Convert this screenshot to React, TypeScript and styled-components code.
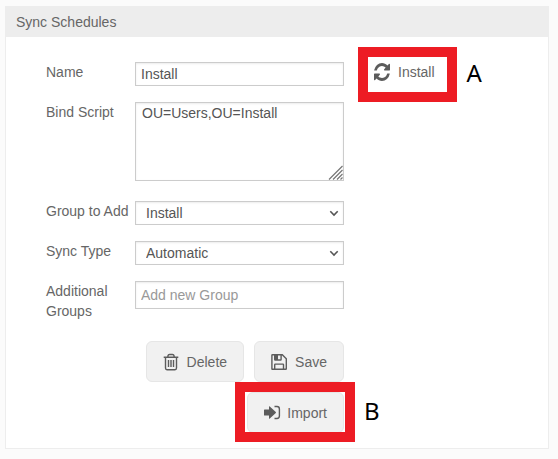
import React from "react";
import styled, { createGlobalStyle, css } from "styled-components";

const GlobalStyle = createGlobalStyle`
  * { box-sizing: border-box; }
  body {
    margin: 0;
    background: #fbfbfb;
    color: #555;
    font: 14px/20px "Liberation Sans", Arial, sans-serif;
  }
`;

const Panel = styled.section`
  margin: 6px 9px 9px 5px;
  background: #fff;
  border: 1px solid #ededed;
  border-top: 0;
`;

const PanelTitle = styled.h1`
  margin: 0;
  padding: 6px 10px 5px;
  background: #ededed;
  color: #666;
  font-size: 14px;
  font-weight: normal;
  line-height: 20px;
`;

const Form = styled.form`
  display: grid;
  gap: 16px;
  padding: 25px 40px 15px;
`;

const Row = styled.div`
  display: grid;
  grid-template-columns: 89px minmax(0, 209px) 1fr;
  align-items: start;
`;

const Label = styled.label`
  color: #666;
`;

const control = css`
  display: block;
  width: 100%;
  margin: 0;
  border: 1px solid #ccc;
  border-radius: 0;
  background: #fff;
  box-shadow: inset 0 1px 2px rgba(0, 0, 0, 0.08);
  color: #555;
  font: inherit;
  outline: none;
`;

const TextInput = styled.input<{ $tall?: boolean }>`
  ${control}
  height: ${(p) => (p.$tall ? 28 : 24)}px;
  padding: 0 5px;
  &::placeholder { color: #999; opacity: 1; }
`;

const SelectBox = styled.div`
  position: relative;
`;

const Select = styled.select`
  ${control}
  appearance: none;
  height: 24px;
  padding: 0 20px 0 10px;
`;

const Chevron = styled.svg`
  position: absolute;
  right: 5px;
  top: 9px;
  width: 10px;
  height: 7px;
  pointer-events: none;
`;

const ScriptBox = styled.div`
  position: relative;
  margin-bottom: 4px;
`;

const TextArea = styled.textarea`
  ${control}
  height: 79px;
  padding: 0 6px;
  resize: none;
`;

const Grip = styled.svg`
  position: absolute;
  right: 1px;
  bottom: 1px;
  width: 15px;
  height: 15px;
  pointer-events: none;
`;

const Actions = styled.div`
  display: flex;
  flex-wrap: wrap;
  justify-content: flex-end;
  gap: 10px;
  width: 100%;
  max-width: 298px;
  padding-top: 4px;
`;

const Button = styled.button<{ $plain?: boolean }>`
  display: inline-flex;
  align-items: center;
  gap: 8px;
  height: ${(p) => (p.$plain ? 35 : 41)}px;
  padding: ${(p) => (p.$plain ? "0 11px 5px 5px" : "0 16px")};
  border: 1px solid ${(p) => (p.$plain ? "transparent" : "#e6e6e6")};
  border-radius: 6px;
  background: ${(p) => (p.$plain ? "transparent" : "#f1f1f1")};
  color: #666;
  font: inherit;
  white-space: nowrap;
  cursor: pointer;
`;

const Icon = styled.svg<{ $width?: number }>`
  flex: none;
  width: ${(p) => p.$width ?? 16}px;
  height: 18px;
  color: #5c5c5c;
`;

const Marked = styled.div<{ $side?: boolean }>`
  position: relative;
  display: flex;
  width: max-content;
  ${(p) => p.$side && "margin: -5px 0 -6px 24px;"}

  &::after {
    content: "";
    position: absolute;
    inset: ${(p) => (p.$side ? "-10px" : "-10px -11px -9px -12px")};
    border: 10px solid #ed1c24;
    pointer-events: none;
  }
`;

const Marker = styled.span`
  position: absolute;
  left: 100%;
  top: 0;
  bottom: 4px;
  display: flex;
  align-items: center;
  margin-left: 20px;
  color: #000;
  font-family: "Noto Sans", "Open Sans", sans-serif;
  font-size: 24px;
  line-height: 32px;
`;

const RefreshIcon = () => (
  <Icon viewBox="0 128 1536 1536" preserveAspectRatio="none" aria-hidden="true">
    <path
      fill="currentColor"
      d="M1511 1056q0 5-1 7-64 268-268 434.500t-478 166.500q-146 0-282.500-55t-243.500-157l-129 129q-19 19-45 19t-45-19-19-45v-448q0-26 19-45t45-19h448q26 0 45 19t19 45-19 45l-137 137q71 66 161 102t187 36q134 0 250-65t186-179q11-17 53-117 8-23 30-23h192q13 0 22.500 9.500t9.500 22.500zm25-800v448q0 26-19 45t-45 19h-448q-26 0-45-19t-19-45 19-45l138-138q-148-137-349-137-134 0-250 65t-186 179q-11 17-53 117-8 23-30 23h-199q-13 0-22.500-9.500t-9.500-22.500v-7q65-268 270-434.500t480-166.500q146 0 284 55.500t245 156.500l130-129q19-19 45-19t45 19 19 45z"
    />
  </Icon>
);

const TrashIcon = () => (
  <Icon viewBox="0 0 16 18" fill="none" stroke="currentColor" strokeWidth="1.4" aria-hidden="true">
    <path d="M.7 4.200h14.600M4.900 4V3Q5.200 1.500 6.500 1.500h3Q10.800 1.500 11.100 3v1M2.500 4.500v10.600q0 1.700 1.500 1.700h8q1.500 0 1.500-1.700V4.500" />
    <path d="M5.500 7v7M8 7v7M10.500 7v7" />
  </Icon>
);

const SaveIcon = () => (
  <Icon viewBox="0 0 16 18" fill="none" stroke="currentColor" strokeWidth="1.4" aria-hidden="true">
    <path d="M1.500 1.700h9.800l4 4v10q0 .6-.6.6H1.500q-.6 0-.6-.6V2.300q0-.6.600-.6zM3.700 16v-4.300q0-.6.600-.6h7.600q.6 0 .6.600V16" />
    <path d="M3.700 2v4.500q0 .5.500.5h5.400q.5 0 .5-.5V2" />
    <path d="M4 2h3v5H4z" fill="currentColor" stroke="none" />
  </Icon>
);

const ImportIcon = () => (
  <Icon $width={15} viewBox="0 0 15 18" aria-hidden="true" overflow="visible">
    <path fill="currentColor" d="M.6 5.500h4.400V2.700q0-.9.800-.3l6 5.600q.4.500 0 1l-6 5.600q-.8.600-.8-.3v-2.800H.6q-.6 0-.6-.6V6.100q0-.6.600-.6z" />
    <path fill="none" stroke="currentColor" strokeWidth="1.400" d="M10.500 2.500h2.500q2.400 0 2.400 2.400v7.200q0 2.400-2.400 2.400h-2.500" />
  </Icon>
);

function Dropdown({ id, options }: { id: string; options: string[] }) {
  return (
    <SelectBox>
      <Select id={id} defaultValue={options[0]}>
        {options.map((option) => (
          <option key={option}>{option}</option>
        ))}
      </Select>
      <Chevron viewBox="0 0 10 7" fill="none" stroke="#555" strokeWidth="1.600" aria-hidden="true">
        <path d="M1.300 1.300L5 5l3.700-3.700" />
      </Chevron>
    </SelectBox>
  );
}

export default function App() {
  return (
    <>
      <GlobalStyle />
      <Panel>
        <PanelTitle>Sync Schedules</PanelTitle>
        <Form onSubmit={(e) => e.preventDefault()}>
          <Row>
            <Label htmlFor="name">Name</Label>
            <TextInput id="name" defaultValue="Install" />
            <Marked $side>
              <Button type="button" $plain>
                <RefreshIcon />
                Install
              </Button>
              <Marker>A</Marker>
            </Marked>
          </Row>
          <Row>
            <Label htmlFor="script">Bind Script</Label>
            <ScriptBox>
              <TextArea id="script" defaultValue="OU=Users,OU=Install" spellCheck={false} />
              <Grip viewBox="0 0 15 15" stroke="#777" strokeWidth="1.200" aria-hidden="true">
                <path d="M1 14.500L14.500 1M5 14.500L14.500 5M9 14.500L14.500 9M12.500 14.500L14.500 12.500" />
              </Grip>
            </ScriptBox>
          </Row>
          <Row>
            <Label htmlFor="group">Group to Add</Label>
            <Dropdown id="group" options={["Install"]} />
          </Row>
          <Row>
            <Label htmlFor="type">Sync Type</Label>
            <Dropdown id="type" options={["Automatic"]} />
          </Row>
          <Row>
            <Label htmlFor="additional">Additional Groups</Label>
            <TextInput id="additional" placeholder="Add new Group" $tall />
          </Row>
          <Actions>
            <Button type="button">
              <TrashIcon />
              Delete
            </Button>
            <Button type="submit">
              <SaveIcon />
              Save
            </Button>
            <Marked>
              <Button type="button">
                <ImportIcon />
                Import
              </Button>
              <Marker>B</Marker>
            </Marked>
          </Actions>
        </Form>
      </Panel>
    </>
  );
}
